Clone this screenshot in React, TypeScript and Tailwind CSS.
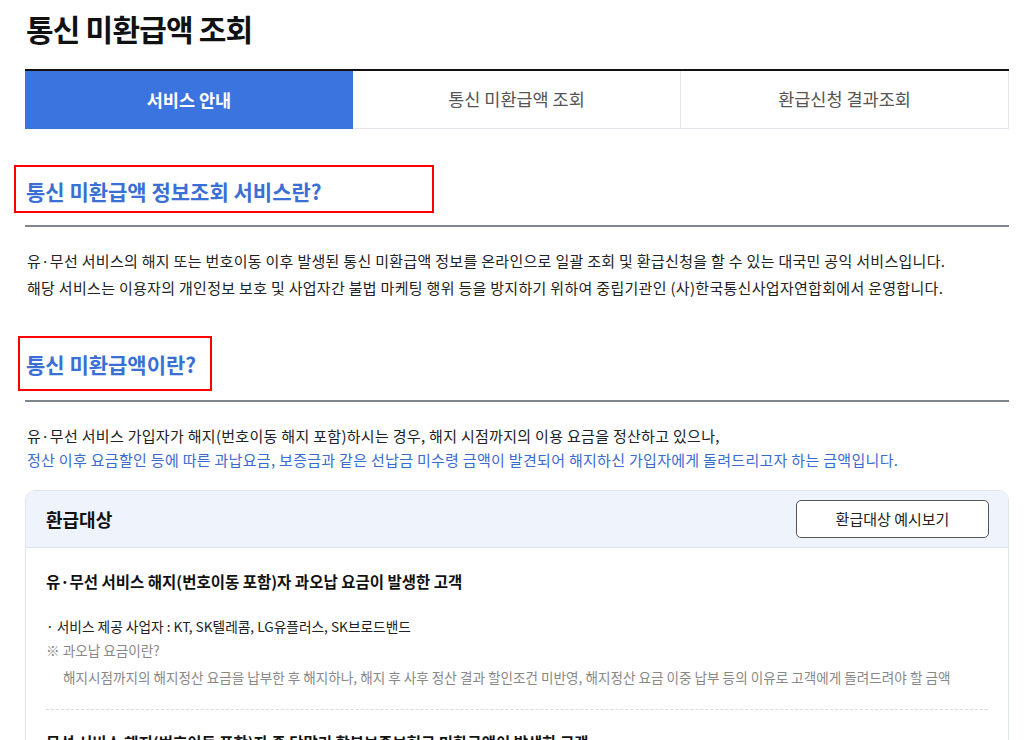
import React from 'react';

const font = { fontFamily: '"Noto Sans CJK KR", "Noto Sans", sans-serif' };

const tabs = ['서비스 안내', '통신 미환급액 조회', '환급신청 결과조회'];

const SectionTitle = ({ children, boxClass }: { children: React.ReactNode; boxClass: string }) => (
  <div className="relative">
    <div className={`absolute border-2 border-[#ff0000] pointer-events-none ${boxClass}`} />
    <h3 className="text-[21px] font-bold text-[#3a6fd5] leading-[28px]">{children}</h3>
  </div>
);

const App = () => {
  return (
    <div className="w-[1024px] bg-white text-[#111]" style={font}>
      <div className="pl-[25px] pr-[15px] pt-[9px]">
        <h1 className="text-[30px] font-bold leading-[38px] tracking-[-0.8px] ml-px">{'통신 미환급액 조회'}</h1>

        <div className="mt-[22px] border-t-2 border-[#111] grid grid-cols-3">
          {tabs.map((t, i) => (
            <div
              key={t}
              className={
                i === 0
                  ? 'h-[58px] flex items-center justify-center bg-[#3b74de] text-white font-bold text-[17.5px]'
                  : 'h-[58px] flex items-center justify-center bg-white text-[#555] text-[17.5px] border-b border-r border-[#e2e6ec]'
              }
            >
              {t}
            </div>
          ))}
        </div>

        <div className="mt-[48px] pl-px">
          <SectionTitle boxClass="-left-[12px] -top-[12px] w-[420px] h-[48px]">{'통신 미환급액 정보조회 서비스란?'}</SectionTitle>
        </div>
        <div className="mt-[20px] h-[2px] bg-[#7e868f]" />
        <div className="mt-[20px] text-[15px] leading-[27px] text-[#222] tracking-[0.3px] pl-[2px]">
          <p>{'유·무선 서비스의 해지 또는 번호이동 이후 발생된 통신 미환급액 정보를 온라인으로 일괄 조회 및 환급신청을 할 수 있는 대국민 공익 서비스입니다.'}</p>
          <p>{'해당 서비스는 이용자의 개인정보 보호 및 사업자간 불법 마케팅 행위 등을 방지하기 위하여 중립기관인 (사)한국통신사업자연합회에서 운영합니다.'}</p>
        </div>

        <div className="mt-[49px] pl-px">
          <SectionTitle boxClass="-left-[8px] -top-[14px] w-[194px] h-[55px]">{'통신 미환급액이란?'}</SectionTitle>
        </div>
        <div className="mt-[22px] h-[2px] bg-[#7e868f]" />
        <div className="mt-[22px] text-[15px] leading-[24px] tracking-[0.3px] pl-[2px]">
          <p className="text-[#222]">{'유·무선 서비스 가입자가 해지(번호이동 해지 포함)하시는 경우, 해지 시점까지의 이용 요금을 정산하고 있으나,'}</p>
          <p className="text-[#3a6bd1]">{'정산 이후 요금할인 등에 따른 과납요금, 보증금과 같은 선납금 미수령 금액이 발견되어 해지하신 가입자에게 돌려드리고자 하는 금액입니다.'}</p>
        </div>

        <div className="mt-[18px] rounded-[10px] border border-[#dfe5ee] overflow-hidden">
          <div className="h-[57px] bg-[#eef3fc] border-b border-[#dfe5ee] flex items-center justify-between pl-[20px] pr-[19px]">
            <span className="text-[18px] font-bold text-[#111]">{'환급대상'}</span>
            <button className="w-[193px] h-[38px] rounded-[5px] border border-[#555] bg-white text-[15px] text-[#222]">
              {'환급대상 예시보기'}
            </button>
          </div>
          <div className="px-[20px] pt-[21px] pb-[30px]">
            <p className="text-[15.5px] font-bold leading-[24px]">{'유·무선 서비스 해지(번호이동 포함)자 과오납 요금이 발생한 고객'}</p>
            <p className="mt-[22px] text-[13.7px] leading-[22px] text-[#222]">{'· 서비스 제공 사업자 : KT, SK텔레콤, LG유플러스, SK브로드밴드'}</p>
            <p className="mt-[2px] text-[13.6px] leading-[22px] text-[#888]">{'※ 과오납 요금이란?'}</p>
            <p className="mt-[5px] pl-[17px] text-[13.6px] leading-[22px] text-[#888]">
              {'해지시점까지의 해지정산 요금을 납부한 후 해지하나, 해지 후 사후 정산 결과 할인조건 미반영, 해지정산 요금 이중 납부 등의 이유로 고객에게 돌려드려야 할 금액'}
            </p>
            <div className="mt-[21px] border-t border-dashed border-[#d8dce2]" />
            <p className="mt-[20px] text-[15.5px] font-bold leading-[24px]">{'무선 서비스 해지(번호이동 포함)자 중 단말기 할부보증보험료 미환급액이 발생한 고객'}</p>
            <p className="mt-[22px] text-[13.7px] leading-[22px] text-[#222]">{'· 서비스 제공 사업자 : KT, SK텔레콤, LG유플러스'}</p>
          </div>
        </div>
      </div>
    </div>
  );
};

export default App;
